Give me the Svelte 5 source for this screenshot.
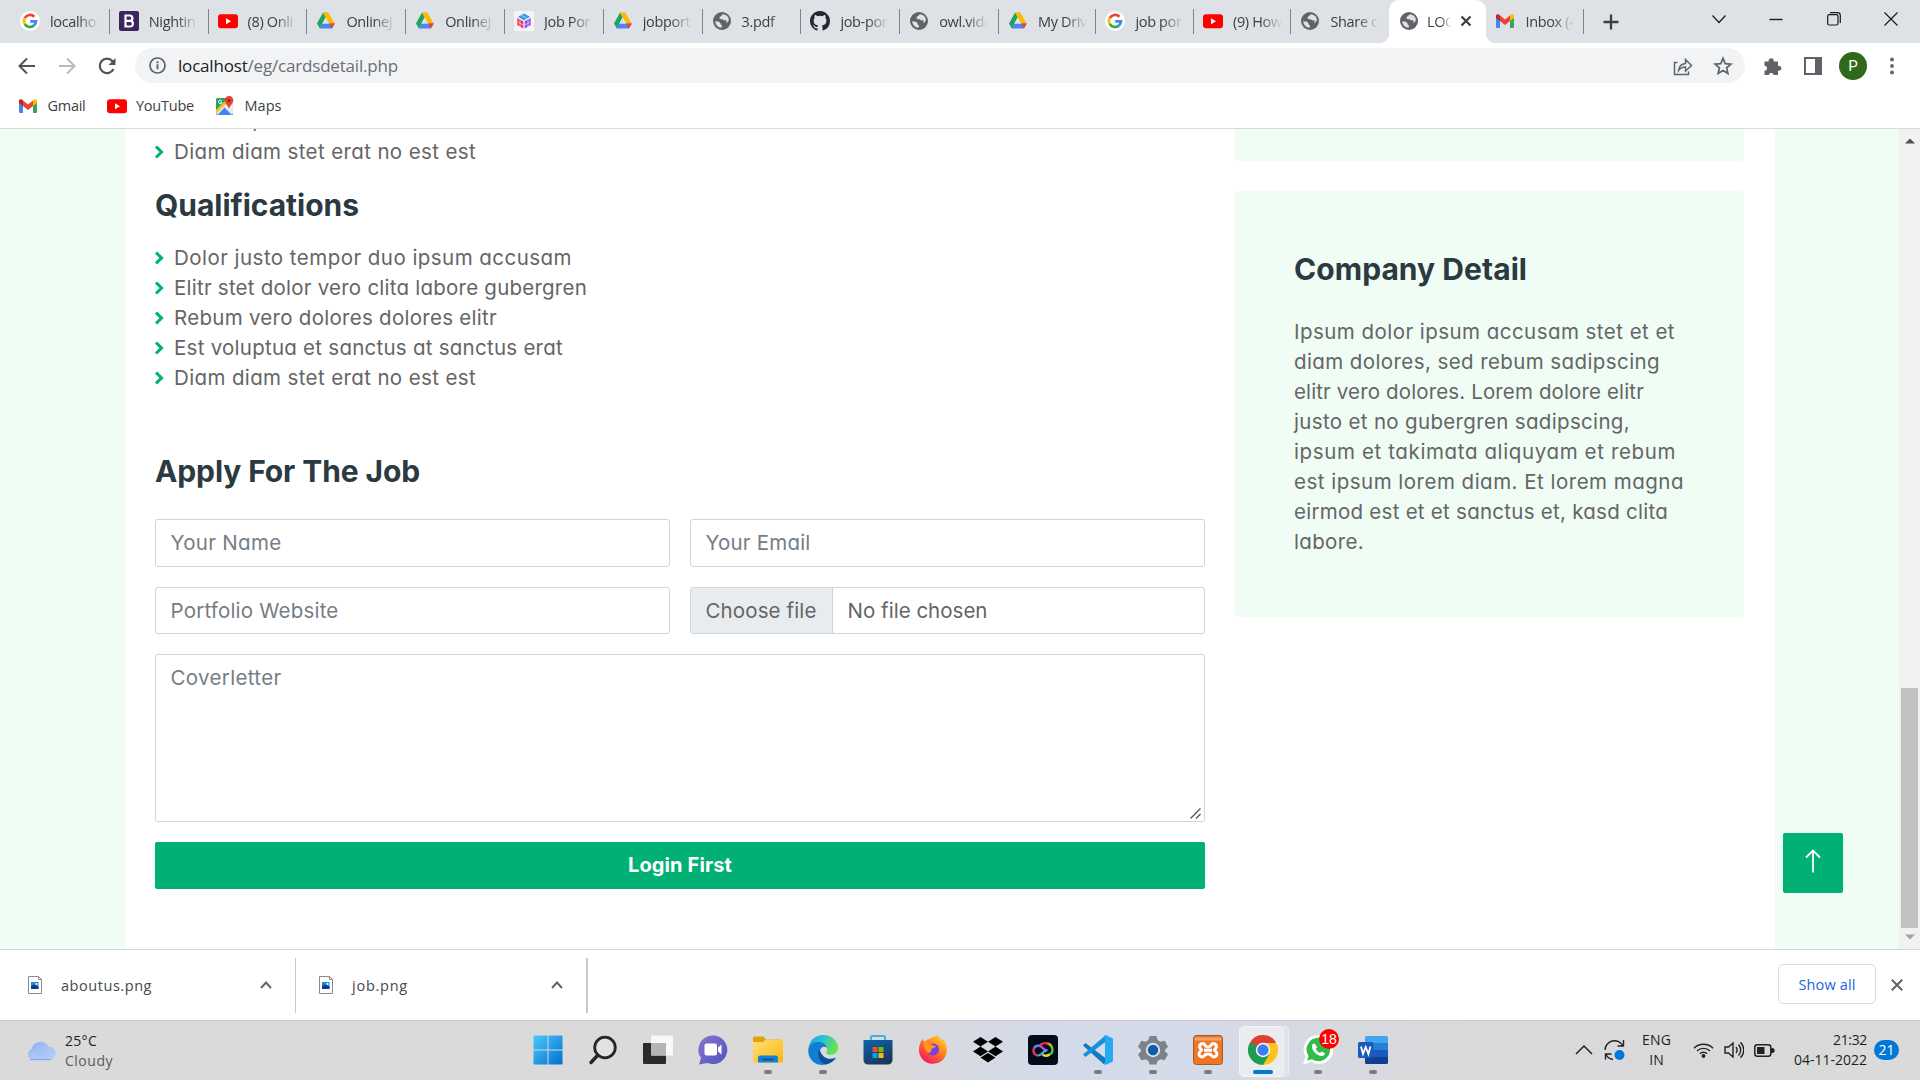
<script>
  const tabs = [
    { icon: 'google', title: 'localhos' },
    { icon: 'bootstrap', title: 'Nightin' },
    { icon: 'youtube', title: '(8) Onli' },
    { icon: 'drive', title: 'OnlineJ' },
    { icon: 'drive', title: 'OnlineJ' },
    { icon: 'cube', title: 'Job Por' },
    { icon: 'drive', title: 'jobport' },
    { icon: 'globe', title: '3.pdf' },
    { icon: 'github', title: 'job-por' },
    { icon: 'globe', title: 'owl.vide' },
    { icon: 'drive', title: 'My Driv' },
    { icon: 'google', title: 'job por' },
    { icon: 'youtube', title: '(9) How' },
    { icon: 'globe', title: 'Share c' },
    { icon: 'globe', title: 'LOG', active: true },
    { icon: 'gmail', title: 'Inbox (4' }
  ];

  const qualifications = [
    ['Dolor justo tempor duo ipsum accusam', 398],
    ['Elitr stet dolor vero clita labore gubergren', 413],
    ['Rebum vero dolores dolores elitr', 323],
    ['Est voluptua et sanctus at sanctus erat', 389],
    ['Diam diam stet erat no est est', 302]
  ];

  const company = [
    ['Ipsum dolor ipsum accusam stet et et', 381],
    ['diam dolores, sed rebum sadipscing', 366],
    ['elitr vero dolores. Lorem dolore elitr', 350],
    ['justo et no gubergren sadipscing,', 336],
    ['ipsum et takimata aliquyam et rebum', 382],
    ['est ipsum lorem diam. Et lorem magna', 390],
    ['eirmod est et et sanctus et, kasd clita', 374],
    ['labore.', 70]
  ];

  const downloads = [
    ['aboutus.png', 91],
    ['job.png', 56]
  ];

  const apps = [
    { icon: 'windows' },
    { icon: 'search' },
    { icon: 'taskview' },
    { icon: 'chat' },
    { icon: 'folder', open: true },
    { icon: 'edge', open: true },
    { icon: 'store' },
    { icon: 'firefox' },
    { icon: 'dropbox' },
    { icon: 'cc' },
    { icon: 'vscode', open: true },
    { icon: 'settings', open: true },
    { icon: 'xampp', open: true },
    { icon: 'chrome', current: true },
    { icon: 'whatsapp', open: true, badge: 18 },
    { icon: 'word', open: true }
  ];

  // Tracks a line of text so that it is exactly `width` pixels wide.
  function fit(node, width) {
    const natural = node.getBoundingClientRect().width;
    node.style.letterSpacing = `${(width - natural) / node.textContent.length}px`;
  }
</script>

{#snippet icon(name)}
  {#if name === 'google'}
    <svg width="20" height="20" viewBox="0 0 20 20"><circle cx="10" cy="10" r="10" fill="#fff" /><g fill="none" stroke-width="2.7"><path d="M14.4 5.8A6 6 0 0 0 4.8 7" stroke="#ea4335" /><path d="M4.8 7a6 6 0 0 0 0 6" stroke="#fbbc05" /><path d="M4.8 13a6 6 0 0 0 9 1.6" stroke="#34a853" /><path d="M13.8 14.6A6 6 0 0 0 16 10.3H10.2" stroke="#4285f4" /></g></svg>
  {:else if name === 'bootstrap'}
    <svg width="20" height="20" viewBox="0 0 20 20"><rect width="20" height="20" rx="2" fill="#3d2560" /><path d="M6.5 4.5h4.2a2.7 2.7 0 0 1 0 5.4H6.5zM6.5 9.9h4.6a2.8 2.8 0 0 1 0 5.6H6.5z" fill="none" stroke="#fff" stroke-width="2.2" /></svg>
  {:else if name === 'youtube'}
    <svg width="20" height="20" viewBox="0 0 20 20"><rect y="3.2" width="20" height="14" rx="3" fill="#f00" /><path d="M8 7.2v6l5-3z" fill="#fff" /></svg>
  {:else if name === 'drive'}
    <svg width="20" height="20" viewBox="0 0 20 20"><path d="M6.9 1.8h5.4L9.6 6.4 3.9 17.6 1 12.4z" fill="#1ea362" /><path d="M6.9 1.8h5.5l6.4 10.6h-5.7z" fill="#ffba00" /><path d="M6.3 12.4h12.5l-3 5.2H3.6z" fill="#4688f4" /><path d="M13.1 12.4h5.7l-3 5.2z" fill="#ea4335" /><path d="M9.6 6.6l3.4 5.8H6.3z" fill="#dee1e6" /></svg>
  {:else if name === 'cube'}
    <svg width="20" height="20" viewBox="0 0 20 20"><rect width="20" height="20" fill="#f4f4f6" /><path d="M10 2.5l6 3.2-6 3.5-6-3.5z" fill="#2a9fe0" /><path d="M3.3 7l6 3.3v7.2l-6-3.4z" fill="#f0365e" /><path d="M16.7 7l-6 3.3v7.2l6-3.4z" fill="#8f4bf0" /><path d="M6 8v8M14 8v8M4 11l5 3M16 11l-5 3M7 4l6 3.5" stroke="#f4f4f6" stroke-width=".6" /></svg>
  {:else if name === 'globe'}
    <svg width="20" height="20" viewBox="0 0 20 20"><circle cx="10" cy="10" r="9" fill="#5f6368" /><path d="M3.2 10.2c2.500.2 3.700.3 4.800 1.200.9.8 0 1.800 1 2.300.8.4 1.400 1 .8 2.900-3.500.2-6.400-2.800-6.600-6.400zM11 3.200c-2.200 1.100-1 2-3 2.300-.7.1-.5 1.200-.2 2 .4 1 1.700.6 2.700.7 1 .1.8 1.100 1.900 1.200 1 0 1.400-.4 2 .200.500.6.1 1.800-.3 2.800 1.600-1 2.700-1.900 2.700-3.800 0-2.600-2.300-5-5.800-5.400z" fill="#dee1e6" /></svg>
  {:else if name === 'github'}
    <svg width="20" height="20" viewBox="0 0 16 16"><path d="M8 0C3.580 0 0 3.580 0 8c0 3.540 2.290 6.530 5.470 7.590.4.070.55-.17.55-.38 0-.19-.01-.82-.01-1.490-2.010.37-2.530-.49-2.690-.94-.09-.23-.48-.94-.82-1.130-.28-.15-.68-.52-.01-.53.63-.01 1.080.58 1.230.82.72 1.210 1.870.87 2.330.66.070-.52.28-.87.51-1.070-1.780-.2-3.640-.89-3.640-3.950 0-.87.31-1.590.82-2.150-.08-.2-.36-1.020.08-2.120 0 0 .67-.21 2.200.82a7.600 7.600 0 0 1 4 0c1.530-1.040 2.200-.82 2.200-.82.44 1.100.16 1.920.08 2.120.51.56.82 1.270.82 2.150 0 3.070-1.870 3.750-3.650 3.950.29.25.54.73.54 1.480 0 1.070-.01 1.930-.01 2.200 0 .21.15.46.55.38A8 8 0 0 0 16 8c0-4.420-3.580-8-8-8z" fill="#24292f" /></svg>
  {:else if name === 'gmail'}
    <svg width="20" height="20" viewBox="0 0 20 20"><path d="M1 6v9.700A1.300 1.300 0 0 0 2.300 17H5V9z" fill="#4285f4" /><path d="M15 9v8h2.700a1.300 1.300 0 0 0 1.300-1.300V6z" fill="#34a853" /><path d="M5 4.500l5 4 5-4V10l-5 4-5-4z" fill="#ea4335" /><path d="M1 5.200C1 3 3.400 2.800 5 4.500V10L1 7z" fill="#c5221f" /><path d="M19 5.200C19 3 16.600 2.800 15 4.500V10l4-3z" fill="#fbbc04" /></svg>
  {:else if name === 'maps'}
    <svg width="20" height="20" viewBox="0 0 20 20"><rect x="1" y="2" width="17" height="17" rx="1.500" fill="#1fa463" /><path d="M1 17L16 2l2 3v12l-1.500 2H3z" fill="#e8eaed" /><path d="M2.500 19l7-7.500 7.500 7.500z" fill="#4285f4" /><path d="M1 14l9-9 2 2-11 11z" fill="#fbc02d" /><path d="M14 0a4.300 4.300 0 0 0-4.300 4.400C9.700 7.500 13.200 9 14 13c.8-4 4.400-5.500 4.400-8.600A4.300 4.300 0 0 0 14 0z" fill="#ea4335" /><circle cx="14" cy="4.400" r="1.500" fill="#8c1d18" /><path d="M6.600 4.700A1.800 1.800 0 1 0 7 6.300H5.300" fill="none" stroke="#fff" /></svg>
  {:else if name === 'windows'}
    <svg width="30" height="30" viewBox="0 0 30 30"><defs><linearGradient id="win" x2="1" y2="1"><stop stop-color="#4cc9fb" /><stop offset="1" stop-color="#006fd0" /></linearGradient></defs><path d="M.5 1.500a1 1 0 0 1 1-1h13v14H.5zM15.500.5h13a1 1 0 0 1 1 1v13h-14zM.5 15.500h14v14h-13a1 1 0 0 1-1-1zM15.500 15.500h14v13a1 1 0 0 1-1 1h-13z" fill="url(#win)" /></svg>
  {:else if name === 'search'}
    <svg width="30" height="30" viewBox="0 0 30 30"><circle cx="17" cy="12.500" r="10.300" fill="#e2e2e2" stroke="#262626" stroke-width="2.800" /><path d="M9.500 20.500l-6.500 7" stroke="#262626" stroke-width="3.400" stroke-linecap="round" /></svg>
  {:else if name === 'taskview'}
    <svg width="30" height="30" viewBox="0 0 30 30"><rect y="8" width="23" height="21" rx="1" fill="#2b2b2b" /><rect x="8" y="0.500" width="22" height="20" rx="1" fill="#f8f8f8" /><path d="M8 8h15v12.500H8z" fill="#b5b5b5" /></svg>
  {:else if name === 'chat'}
    <svg width="30" height="30" viewBox="0 0 30 30"><defs><linearGradient id="chat" x2="1" y2="1"><stop stop-color="#8e74c8" /><stop offset="1" stop-color="#4a55c4" /></linearGradient></defs><path d="M15 .5a14.300 14.300 0 1 1-5.500 27.500L1 29.500 3 23A14.300 14.300 0 0 1 15 .5z" fill="url(#chat)" /><rect x="6.500" y="8.500" width="12.500" height="12" rx="2" fill="#fff" /><path d="M20 12.500l3.500-3v10l-3.500-3z" fill="#fff" /></svg>
  {:else if name === 'folder'}
    <svg width="30" height="30" viewBox="0 0 30 30"><defs><linearGradient id="fold" x2="1" y2="1"><stop stop-color="#ffe078" /><stop offset="1" stop-color="#fbb80f" /></linearGradient></defs><path d="M0 3a1.500 1.500 0 0 1 1.500-1.500h9L13 4.500h15V10H0z" fill="#e0a30a" /><path d="M0 7h10l3-2.500h15.500A1.500 1.500 0 0 1 30 6v20a1.500 1.500 0 0 1-1.500 1.500h-27A1.500 1.500 0 0 1 0 26z" fill="url(#fold)" /><path d="M5 27.500V22.500a2 2 0 0 1 2-2h16a2 2 0 0 1 2 2v5z" fill="#1780d0" /><path d="M9 24.500h12" stroke="#0b4f8c" stroke-width="1.400" /></svg>
  {:else if name === 'edge'}
    <svg width="30" height="30" viewBox="0 0 30 30"><defs><linearGradient id="edgeTop" x2="1" y2=".4"><stop stop-color="#1a9ae0" /><stop offset=".5" stop-color="#2cc3d0" /><stop offset="1" stop-color="#67e34f" /></linearGradient></defs><path d="M.5 14C1 5.500 7.500 0 15 0c9 0 15 6.500 15 12.500 0 4.500-3.300 7.300-7.200 7.300-3 0-5.300-.8-4.300-2.800 1.500-3 .5-7-5-8C8 8 3 10 .5 14z" fill="url(#edgeTop)" /><path d="M.3 15C1 9 6 7 10.500 7c5 0 8 3 8.200 6-3-3-7 0-7 4.500 0 6 6 9.500 13.800 6.500C21 31 11 31.500 5.500 27 2 24 0 20 .3 15z" fill="#127dd1" /><path d="M11.500 14c-3 5-.5 13 6 15.500 4-.5 8.500-3 10.500-7-7 3-14 1-16.500-8.500z" fill="#0c4f9c" /></svg>
  {:else if name === 'store'}
    <svg width="30" height="30" viewBox="0 0 30 30"><defs><linearGradient id="store" y2="1" x2=".5"><stop stop-color="#0b66ad" /><stop offset="1" stop-color="#1d375f" /></linearGradient></defs><path d="M8 6V2.500A1.500 1.500 0 0 1 9.500 1h11A1.500 1.500 0 0 1 22 2.500V6" fill="none" stroke="#35b4ee" stroke-width="2" /><path d="M.5 5h29v20a4.500 4.500 0 0 1-4.500 4.500H5A4.500 4.500 0 0 1 .5 25z" fill="url(#store)" /><path d="M9.500 12h5v5h-5z" fill="#f25022" /><path d="M15.500 12h5v5h-5z" fill="#7fba00" /><path d="M9.500 18h5v5h-5z" fill="#00a4ef" /><path d="M15.500 18h5v5h-5z" fill="#ffb900" /></svg>
  {:else if name === 'firefox'}
    <svg width="30" height="30" viewBox="0 0 30 30"><defs><linearGradient id="fox" x1="1" x2=".3" y2="1"><stop stop-color="#ffe83d" /><stop offset=".45" stop-color="#ff8a1c" /><stop offset="1" stop-color="#f5165f" /></linearGradient></defs><path d="M19 0c1.500 2 3 3 4.500 5.500L25 4c3 4 4.500 8 3.700 13.500A14 14 0 0 1 1 16C.8 11 2 7 5 3.500L6 7l4-2.500z" fill="url(#fox)" /><circle cx="15" cy="14.500" r="6" fill="#7a3fe0" /><path d="M5 7.500c4-1.500 7 .5 9 2.500l4 1c-1 2-3 2-4 2.500-1 1.500 0 4-3 4.500-3-1-5-5-6-10.500z" fill="#ff9420" /></svg>
  {:else if name === 'dropbox'}
    <svg width="30" height="30" viewBox="0 0 30 30"><path d="M7.500 2l7.500 4.800-7.500 4.800L0 6.800zM22.500 2L30 6.800l-7.500 4.800L15 6.800zM7.500 11.600l7.500 4.800-7.500 4.800L0 16.400zM22.500 11.600l7.500 4.800-7.500 4.800-7.500-4.800zM15 18l7.500 4.600L15 27.500l-7.500-4.900z" fill="#000" /></svg>
  {:else if name === 'cc'}
    <svg width="30" height="30" viewBox="0 0 30 30"><defs><linearGradient id="cc" x2="1" y2=".3"><stop stop-color="#f5406a" /><stop offset=".45" stop-color="#e8262d" /><stop offset=".75" stop-color="#ff9a1f" /><stop offset="1" stop-color="#49c947" /></linearGradient><linearGradient id="cc2" x2="1" y1=".3" y2="0"><stop stop-color="#ee2b50" /><stop offset=".2" stop-color="#3ba3f7" /><stop offset=".6" stop-color="#b04bf0" /><stop offset="1" stop-color="#f54b8a" /></linearGradient></defs><rect width="30" height="30" rx="4" fill="#020b1c" /><path d="M9.500 20.500a5 5 0 0 1 0-9.800c3-.4 4.500 1.300 6 3l3 3" fill="none" stroke="url(#cc2)" stroke-width="2.400" /><path d="M12 10.300c3.500-4 12.500-2.300 12.500 4.700a5 5 0 0 1-6 5" fill="none" stroke="url(#cc)" stroke-width="2.400" /><path d="M9.500 20.500c5 .5 5-5.500 10-5.500" fill="none" stroke="#3bb8d8" stroke-width="2.200" /><path d="M14.500 19.500c2 1.500 5 1.500 7 0" fill="none" stroke="#f5d32e" stroke-width="2.200" /></svg>
  {:else if name === 'vscode'}
    <svg width="30" height="30" viewBox="0 0 30 30"><path d="M0 10.500L2.500 8 23 23.500V29L20.500 29z" fill="#1279bd" /><path d="M0 19.500L2.500 22 23 6.500V0z" fill="#1691d8" /><path d="M22.500 0L30 3.500v23L22.500 30l-2-1.200L22 27V3l-1.500-1.700z" fill="#25a9f2" /></svg>
  {:else if name === 'settings'}
    <svg width="30" height="30" viewBox="0 0 30 30"><path d="M11.500 1h7l1 4 3 1.700 4.200-1 3.300 6-3 3v1.600l3 3-3.300 6-4.200-1-3 1.700-1 3.500h-7l-1-3.500-3-1.700-4.200 1-3.300-6 3-3v-1.600l-3-3 3.300-6 4.200 1 3-1.700z" fill="#7b8289" /><circle cx="15" cy="15" r="7.200" fill="#dfe3e8" /><circle cx="15" cy="15" r="5.200" fill="#0d5cab" /></svg>
  {:else if name === 'xampp'}
    <svg width="30" height="30" viewBox="0 0 30 30"><rect x=".5" y=".5" width="29" height="29" rx="3" fill="#ef7423" stroke="#9f5a2c" /><path d="M1.500 2.500h27v3h-27z" fill="#f6a36c" /><path d="M12 10a3 3 0 0 0-5.500 1.500c0 2 2 2.500 2 3.500s-2.500 1.500-2.500 4a3 3 0 0 0 5.500 1.500c1-2 6-2 7 0A3 3 0 0 0 24 19c0-2.500-2.500-3-2.500-4s2-1.500 2-3.500A3 3 0 0 0 18 10c-1 2.500-5 2.500-6 0zM11 15.200h8" fill="none" stroke="#fff" stroke-width="3" /></svg>
  {:else if name === 'chrome'}
    <svg width="30" height="30" viewBox="0 0 30 30"><path d="M15 15L2 7.500A15 15 0 0 1 28 7.500z" fill="#dd4032" /><path d="M15 15L28 7.500A15 15 0 0 1 15 30z" fill="#fcc31e" /><path d="M2 7.500A15 15 0 0 0 15 30l6.500-11.200-6.500-3.800z" fill="#1d9c53" /><path d="M15 8h13.300l-6 9z" fill="#fcc31e" /><path d="M2 7.500L9 19l6-11z" fill="#dd4032" /><path d="M2 7.500L8.900 19 12 12z" fill="#1d9c53" /><circle cx="15" cy="15" r="7.200" fill="#fff" /><circle cx="15" cy="15" r="5.700" fill="#3a7df0" /></svg>
  {:else if name === 'whatsapp'}
    <svg width="30" height="30" viewBox="0 0 30 30"><path d="M15.500 0a14.500 14.500 0 1 1-7 27L0 29.500 2.500 21.500A14.500 14.500 0 0 1 15.500 0z" fill="#fff" /><path d="M15.500 2.800a11.700 11.700 0 1 1-6.600 21.400L4.200 25.500 5.600 21A11.700 11.700 0 0 1 15.500 2.800z" fill="#31bb4b" /><path d="M11.500 8.500c-1.500 0-3 1.500-2.500 4 .8 4 5 8 9.500 8.500 2 .1 3.500-1.200 3.500-2.700l-3.300-1.900-1.700 1.700c-2-.8-3.500-2.400-4.300-4.300l1.500-1.600z" fill="#fff" /></svg>
  {:else if name === 'word'}
    <svg width="30" height="30" viewBox="0 0 30 30"><path d="M7 2.500A1.500 1.500 0 0 1 8.500 1h20A1.500 1.500 0 0 1 30 2.500V8H7z" fill="#41a5ee" /><path d="M7 8h23v7H7z" fill="#2b7cd3" /><path d="M7 15h23v7H7z" fill="#185abd" /><path d="M7 22h23v5.500a1.500 1.500 0 0 1-1.500 1.500h-20A1.500 1.500 0 0 1 7 27.500z" fill="#103f91" /><rect y="7" width="15.500" height="16" rx="1.500" fill="#185abd" /><path d="M3 11.500l2 7.500 2.700-7 2.700 7 2-7.500" fill="none" stroke="#fff" stroke-width="1.800" /></svg>
  {:else if name === 'file'}
    <svg width="14" height="18" viewBox="0 0 14 18"><path d="M.5.5h10l3 3v14H.5z" fill="#fff" stroke="#8a8a8a" /><path d="M10.500.5v3h3" fill="none" stroke="#8a8a8a" /><path d="M3 6h7.500v7H3z" fill="#1d8fe0" /><path d="M3 10l3-1.500 4.500 2V13H3z" fill="#123a86" /><circle cx="8.500" cy="8" r="1" fill="#fff" /></svg>
  {/if}
{/snippet}

<div class="screen">
  <header class="tabstrip">
    <div class="tabs">
      {#each tabs as tab, i}
        <div class="tab" class:active={tab.active} class:plain={tabs[i + 1]?.active}>
          {@render icon(tab.icon)}
          <span class="title">{tab.title}</span>
          {#if tab.active}
            <svg width="12" height="12" viewBox="0 0 12 12"><path d="M1.500 1.500l9 9m0-9l-9 9" stroke="#3c4043" stroke-width="2.200" /></svg>
          {/if}
        </div>
      {/each}
    </div>
    <svg class="plus" width="16" height="16" viewBox="0 0 16 16"><path d="M8 .5v15M.5 8h15" stroke="#3c4043" stroke-width="2.300" /></svg>
    <div class="controls">
      <svg width="14" height="14" viewBox="0 0 14 14"><path d="M.5 3.500l6.500 7 6.500-7" /></svg>
      <svg width="14" height="14" viewBox="0 0 14 14"><path d="M.5 7.500h13" stroke-width="1.400" /></svg>
      <svg width="14" height="14" viewBox="0 0 14 14"><rect x=".7" y="2.700" width="10.300" height="10.300" rx="1.500" /><path d="M3 .7h7.500a2.800 2.800 0 0 1 2.800 2.800V11" /></svg>
      <svg width="14" height="14" viewBox="0 0 14 14"><path d="M.5.5l13 13m0-13l-13 13" /></svg>
    </div>
  </header>

  <div class="toolbar">
    <div class="nav">
      <svg width="18" height="18" viewBox="0 0 18 18"><path d="M17 9H2M9 1.500L1.500 9 9 16.500" fill="none" stroke="#505458" stroke-width="2" /></svg>
      <svg width="18" height="18" viewBox="0 0 18 18"><path d="M1 9h15M9 1.500L16.500 9 9 16.500" fill="none" stroke="#babcbe" stroke-width="2" /></svg>
      <svg width="18" height="18" viewBox="0 0 18 18"><path d="M15.500 12A7.200 7.200 0 1 1 14.500 4.200L16 6" fill="none" stroke="#505458" stroke-width="2.200" /><path d="M17.500 1v7h-7z" fill="#505458" /></svg>
    </div>
    <div class="omnibox">
      <svg width="17" height="17" viewBox="0 0 17 17"><circle cx="8.500" cy="8.500" r="7.500" fill="none" stroke="#5f6368" stroke-width="1.700" /><path d="M8.500 7.300v5M8.500 4.200v2" stroke="#5f6368" stroke-width="1.900" /></svg>
      <span class="url" use:fit={220}>localhost<i>/eg/cardsdetail.php</i></span>
      <div class="omni-actions">
        <svg width="20" height="20" viewBox="0 0 20 20"><path d="M4.500 6.500h-3v12h14v-3M5.500 14.500c.5-4 2.500-6.500 7-7v-4l6 6-6 5.500v-4c-3 0-5 .8-7 3.500z" fill="none" stroke="#5f6368" stroke-width="1.500" /></svg>
        <svg width="20" height="20" viewBox="0 0 20 20"><path d="M10 2.300l2.200 5.300 5.800.5-4.400 3.800 1.300 5.600-4.900-3-4.900 3 1.300-5.600L2 8.100l5.800-.5z" fill="none" stroke="#5f6368" stroke-width="1.700" /></svg>
      </div>
    </div>
    <div class="extras">
      <svg width="20" height="20" viewBox="0 0 20 20"><path d="M1.500 5.500h4.200a2.600 2.600 0 1 1 5 0H15v4.300a2.600 2.600 0 1 1 0 4.900V19h-4.300a2.500 2.500 0 0 0-4.900 0H1.500v-4.200a2.500 2.500 0 0 0 0-5z" fill="#5f6368" /></svg>
      <svg width="20" height="20" viewBox="0 0 20 20"><path d="M2 2h16v16H2z" fill="#fff" stroke="#5f6368" stroke-width="2" /><path d="M12 2h7v16h-7z" fill="#5f6368" /></svg>
      <span class="avatar">P</span>
      <svg width="20" height="20" viewBox="0 0 20 20"><g fill="#5f6368"><circle cx="10" cy="3.500" r="1.900" /><circle cx="10" cy="10" r="1.900" /><circle cx="10" cy="16.500" r="1.900" /></g></svg>
    </div>
  </div>

  <nav class="bookmarks">
    <span class="bookmark">{@render icon('gmail')}<b use:fit={38}>Gmail</b></span>
    <span class="bookmark">{@render icon('youtube')}<b use:fit={58}>YouTube</b></span>
    <span class="bookmark">{@render icon('maps')}<b use:fit={37}>Maps</b></span>
  </nav>

  <div class="viewport">
    <div class="page">
      <div class="container">
        <main>
          <ul class="first">
            {#each qualifications.slice(3) as [text, width]}
              <li><svg width="10" height="14" viewBox="0 0 10 14"><path d="M2 1.500L7.500 7 2 12.500" /></svg><span use:fit={width}>{text}</span></li>
            {/each}
          </ul>
          <h4><span use:fit={204}>Qualifications</span></h4>
          <ul>
            {#each qualifications as [text, width]}
              <li><svg width="10" height="14" viewBox="0 0 10 14"><path d="M2 1.500L7.500 7 2 12.500" /></svg><span use:fit={width}>{text}</span></li>
            {/each}
          </ul>
          <h4 class="apply"><span use:fit={265}>Apply For The Job</span></h4>
          <form>
            <div class="field"><span use:fit={111}>Your Name</span></div>
            <div class="field"><span use:fit={105}>Your Email</span></div>
            <div class="field"><span use:fit={168}>Portfolio Website</span></div>
            <div class="field file">
              <div class="choose"><span use:fit={111}>Choose file</span></div>
              <span use:fit={140}>No file chosen</span>
            </div>
            <div class="field area">
              <span use:fit={111}>Coverletter</span>
              <svg class="grip" width="11" height="11" viewBox="0 0 11 11"><path d="M.5 10.500l10-10M6 10.500L10.500 6" stroke="#555" stroke-width="1.400" /></svg>
            </div>
            <div class="submit"><span use:fit={104}>Login First</span></div>
          </form>
        </main>
        <aside>
          <div class="panel stub"></div>
          <div class="panel">
            <h4><span use:fit={233}>Company Detail</span></h4>
            <p>
              {#each company as [text, width]}
                <span class="line" use:fit={width}>{text}</span>
              {/each}
            </p>
          </div>
        </aside>
      </div>
      <div class="to-top"><svg width="16" height="24" viewBox="0 0 16 24"><path d="M8 23.500V2M1 8.500l7-7 7 7" fill="none" stroke="#fff" stroke-width="1.800" /></svg></div>
    </div>
    <div class="scrollbar">
      <svg width="10" height="6" viewBox="0 0 10 6"><path d="M0 5.500L5 .5l5 5z" fill="#505050" /></svg>
      <div class="thumb"></div>
      <svg width="10" height="6" viewBox="0 0 10 6"><path d="M0 .5l5 5 5-5z" fill="#a3a3a3" /></svg>
    </div>
  </div>

  <div class="shelf">
    {#each downloads as [name, width]}
      <div class="download">
        {@render icon('file')}
        <span use:fit={width}>{name}</span>
        <svg class="caret" width="12" height="8" viewBox="0 0 12 8"><path d="M1 7l5-5.500L11 7" fill="none" stroke="#5f6368" stroke-width="1.900" /></svg>
      </div>
    {/each}
    <div class="show-all"><span use:fit={57}>Show all</span></div>
    <svg width="12" height="12" viewBox="0 0 12 12"><path d="M.8.8l10.400 10.400m0-10.400L.8 11.200" stroke="#5f6368" stroke-width="2" /></svg>
  </div>

  <footer class="taskbar">
    <div class="weather">
      <svg width="30" height="24" viewBox="0 0 30 24"><defs><linearGradient id="cloud" y2="1"><stop stop-color="#86aaf0" /><stop offset="1" stop-color="#d3e3fb" /></linearGradient></defs><path d="M6 21a6 6 0 0 1-.5-11A9.500 9.500 0 0 1 23 8a6.500 6.500 0 0 1 1 13z" fill="url(#cloud)" /><path d="M10 21c-3-6 3-13 12-13a6.500 6.500 0 0 1 2 13z" fill="#9dbcf3" opacity=".5" /><path d="M4 20.700h21" stroke="#7d9fe6" /></svg>
      <div><span use:fit={32}>25°C</span><span class="muted" use:fit={48}>Cloudy</span></div>
    </div>
    <div class="apps">
      {#each apps as app}
        <div class="app" class:open={app.open} class:current={app.current}>
          {@render icon(app.icon)}
          {#if app.badge}<span class="badge">{app.badge}</span>{/if}
        </div>
      {/each}
    </div>
    <div class="tray">
      <svg width="18" height="10" viewBox="0 0 18 10"><path d="M1 9l8-8 8 8" fill="none" stroke="#222" stroke-width="1.500" /></svg>
      <svg class="sync" width="21" height="22" viewBox="0 0 21 22"><path d="M1 11a9.500 9.500 0 0 1 18-4M19.500 1v6h-6M9 20.500a9.500 9.500 0 0 1-7-5M1.500 20.500V15h6" fill="none" stroke="#222" stroke-width="1.400" /><circle cx="15.500" cy="16" r="5" fill="#0078d7" /></svg>
      <div class="lang"><span use:fit={29}>ENG</span><span>IN</span></div>
      <svg class="wifi" width="21" height="16" viewBox="0 0 21 16"><g fill="none" stroke="#222" stroke-width="1.400"><path d="M1 6.200a13.500 13.500 0 0 1 19 0M4 9a9.300 9.300 0 0 1 13 0M6.800 11.700a5.300 5.300 0 0 1 7.400 0" /></g><circle cx="10.500" cy="14" r="1.900" fill="#222" /></svg>
      <svg class="volume" width="20" height="18" viewBox="0 0 20 18"><path d="M1 6h3.500L9 2v14l-4.500-4H1zM12 6a5 5 0 0 1 0 6M14.500 3.500a8 8 0 0 1 0 11M16.500 1.200a11 11 0 0 1 0 15.600" fill="none" stroke="#222" stroke-width="1.400" /></svg>
      <svg class="battery" width="21" height="13" viewBox="0 0 21 13"><rect x=".8" y=".8" width="16" height="11.400" rx="2.500" fill="none" stroke="#222" stroke-width="1.500" /><rect x="3" y="3" width="7.500" height="7" fill="#222" /><path d="M17.500 4.500l2.500.5v3l-2.500.5z" fill="#222" stroke="#222" /></svg>
      <div class="clock"><span use:fit={34}>21:32</span><span use:fit={73}>04-11-2022</span></div>
      <span class="count">21</span>
    </div>
  </footer>
</div>

<style>
  :global(body) { margin: 0; overflow: hidden; }
  .screen { width: 1920px; height: 1080px; display: flex; flex-direction: column; overflow: hidden; background: #fff; font-family: 'Open Sans', 'Noto Sans', sans-serif; font-size: 14.500px; color: #3c4043; }
  .screen :global(*) { box-sizing: border-box; }
  svg { flex: none; display: block; }
  span, b { white-space: pre; }

  .tabstrip { height: 43px; flex: none; display: flex; align-items: center; background: #dee1e6; padding-left: 11px; }
  .tabs { display: flex; height: 43px; }
  .tab { position: relative; width: 98.800px; display: flex; align-items: center; gap: 10px; padding: 0 0 1px 9px; }
  .tab:nth-child(n + 11) { width: 97.500px; }
  .tab::after { content: ''; position: absolute; right: 0; top: 9px; width: 1px; height: 25px; background: #80848a; }
  .tab.active::after, .tab.plain::after { display: none; }
  .title { width: 50px; overflow: hidden; letter-spacing: -0.350px; -webkit-mask-image: linear-gradient(90deg, #000 55%, transparent 98%); mask-image: linear-gradient(90deg, #000 55%, transparent 98%); }
  .tab.active { background: #fff; border-radius: 10px 10px 0 0; padding-left: 10px; gap: 8px; }
  .active::before { content: ''; position: absolute; left: -10px; right: -10px; bottom: 0; height: 10px; background: radial-gradient(circle at 0 0, transparent 10px, #fff 10.500px) left / 10px 10px no-repeat, radial-gradient(circle at 100% 0, transparent 10px, #fff 10.500px) right / 10px 10px no-repeat; }
  .active .title { width: 25px; }
  .plus { margin-left: 19px; }
  .controls { margin-left: auto; display: flex; gap: 43.500px; padding: 0 22px 6px 0; }
  .controls svg { fill: none; stroke: #1a1a1a; stroke-width: 1.200; }

  .toolbar { height: 45px; flex: none; display: flex; align-items: center; padding-left: 18px; }
  .nav { display: flex; gap: 22px; width: 117px; }
  .omnibox { width: 1610px; height: 35px; border-radius: 18px; background: #f1f3f4; display: flex; align-items: center; padding: 0 12px 0 14px; }
  .url { margin-left: 12px; font-size: 17px; color: #202124; }
  .url i { font-style: normal; color: #6b6f74; }
  .omni-actions { margin-left: auto; display: flex; gap: 20px; }
  .extras { display: flex; align-items: center; gap: 20px; margin-left: 18px; }
  .avatar { width: 28px; height: 28px; margin: 0 -5px 0 -4px; border-radius: 50%; background: #2f6a1c; color: #fff; font: 15px/28px Roboto, sans-serif; text-align: center; }

  .bookmarks { height: 41px; flex: none; border-bottom: 1px solid #d8dadd; display: flex; gap: 21px; padding: 0 0 5px 18px; align-items: center; }
  .bookmark { display: flex; align-items: center; gap: 9.500px; }
  .bookmark b { font-weight: 400; }

  .viewport { height: 820px; flex: none; display: flex; }
  .page { position: relative; width: 1899px; height: 820px; overflow: hidden; background: #effdf5; padding-left: 125px; font-family: Inter, 'Open Sans', sans-serif; font-size: 20.500px; color: #666565; font-feature-settings: 'cv11' 1; }
  .container { width: 1650px; height: 820px; background: #fff; padding: 0 30px; display: flex; gap: 30px; }
  main { width: 1050px; }
  ul { list-style: none; margin: 0; padding: 0; }
  .first { margin-top: -22px; }
  li { height: 30px; display: flex; align-items: center; gap: 9px; }
  li span { padding-bottom: 2px; }
  .first li:first-child span { padding-bottom: 5px; }
  li svg { margin-left: -1px; margin-right: 1px; fill: none; stroke: #00b074; stroke-width: 3.100; }
  h4 { margin: 20px 0; height: 36px; line-height: 36px; font-size: 30px; font-weight: 700; color: #2b3940; font-feature-settings: normal; }
  h4 span { display: inline-block; }
  .apply { margin: 60px 0 30px; }
  form { display: grid; grid-template-columns: 515px 515px; grid-template-rows: 48px 47px 168px 47px; gap: 20px; }
  .field { border: 1px solid #ced4da; border-radius: 3px; padding: 0 15px 1px 14.500px; display: flex; align-items: center; color: #757d85; background: #fff; }
  .file { padding-left: 0; padding-bottom: 0; color: #666565; }
  .file span { padding-bottom: 1px; }
  .choose { width: 142px; height: 45px; display: flex; align-items: center; padding-left: 14.500px; margin-right: 14.500px; border-right: 1px solid #ced4da; background: #e9ecef; }
  .area { grid-column: span 2; position: relative; align-items: flex-start; padding-top: 10px; }
  .grip { position: absolute; right: 3px; bottom: 2px; }
  .submit { grid-column: span 2; display: flex; align-items: center; justify-content: center; padding-bottom: 2px; border-radius: 2px; background: #00b074; color: #fff; font-weight: 700; font-size: 20px; font-feature-settings: normal; }
  aside { width: 509px; }
  .panel { height: 426px; border-radius: 3px; background: #effdf5; padding: 60px 0 0 59px; }
  .panel.stub { height: 32px; margin-bottom: 30px; padding: 0; }
  .panel h4 { margin: 0 0 30px; }
  p { margin: 0; display: flex; flex-direction: column; align-items: flex-start; line-height: 30px; }
  .to-top { position: absolute; left: 1783px; top: 704px; width: 60px; height: 60px; border-radius: 2px; background: #00b074; display: flex; align-items: center; justify-content: center; padding-bottom: 4px; }
  .scrollbar { width: 21px; background: #f1f1f1; display: flex; flex-direction: column; align-items: center; padding: 9px 0; }
  .thumb { width: 17px; height: 240px; margin: auto 0 6px; background: #c1c1c1; }

  .shelf { height: 71px; flex: none; border-top: 1px solid #d5d7da; display: flex; align-items: center; padding-right: 17px; color: #45484c; }
  .download { height: 55px; width: 296px; display: flex; align-items: center; padding: 0 23px 0 28px; border-right: 1px solid #c6c8cb; }
  .download + .download { width: 292px; padding-left: 23px; border-right-width: 2px; }
  .download span { margin-left: 19px; }
  .caret { margin-left: auto; }
  .show-all { margin: 0 15px 2px auto; width: 98px; height: 40px; border: 1px solid #dadce0; border-radius: 5px; display: flex; align-items: center; justify-content: center; color: #1a66e0; }

  .taskbar { height: 60px; flex: none; border-top: 1px solid #c9c9cb; background: linear-gradient(90deg, #dadada 0 45%, #d5dae7 53%, #d4dbe9 61%, #d9d9dc 74%, #dadada); display: flex; align-items: center; font-size: 14px; line-height: 20px; color: #1f1f1f; }
  .weather { width: 520px; display: flex; align-items: center; gap: 9px; padding-left: 26px; }
  .weather div, .lang, .clock { display: flex; flex-direction: column; align-items: flex-start; }
  .weather .muted { color: #5c5c5c; }
  .apps { display: flex; height: 59px; }
  .app { position: relative; width: 55px; display: flex; align-items: center; justify-content: center; padding-bottom: 1px; }
  .app svg { position: relative; }
  .open::after, .current::after { content: ''; position: absolute; bottom: 6px; left: 24px; width: 8px; height: 4px; border-radius: 2px; background: #7b7b7f; }
  .current::after { left: 18px; width: 20px; background: #0078d4; }
  .current::before { content: ''; position: absolute; left: 4px; top: 5px; width: 43px; height: 49px; border-radius: 5px; background: #ebecf0; border: 1px solid #f5f5f8; box-shadow: 5px 0 0 -1px #e2e3e8, 5px 0 0 0 #eeeef2; }
  .badge { position: absolute; left: 29px; top: 8px; width: 20px; height: 20px; border-radius: 50%; background: #f00; color: #fff; font: 14px/20px 'Liberation Sans', sans-serif; text-align: center; }
  .tray { margin-left: auto; display: flex; align-items: center; padding: 0 21px 1px 0; }
  .sync { margin-left: 11px; }
  .lang { align-items: center; margin-left: 17px; }
  .wifi { margin-left: 22px; }
  .volume { margin-left: 10px; }
  .battery { margin-left: 10px; }
  .clock { align-items: flex-end; width: 74px; margin-left: 18px; }
  .count { width: 25px; height: 20px; margin-left: 7px; border-radius: 10px; background: #0078d7; color: #fff; font-size: 14px; text-align: center; }
</style>
